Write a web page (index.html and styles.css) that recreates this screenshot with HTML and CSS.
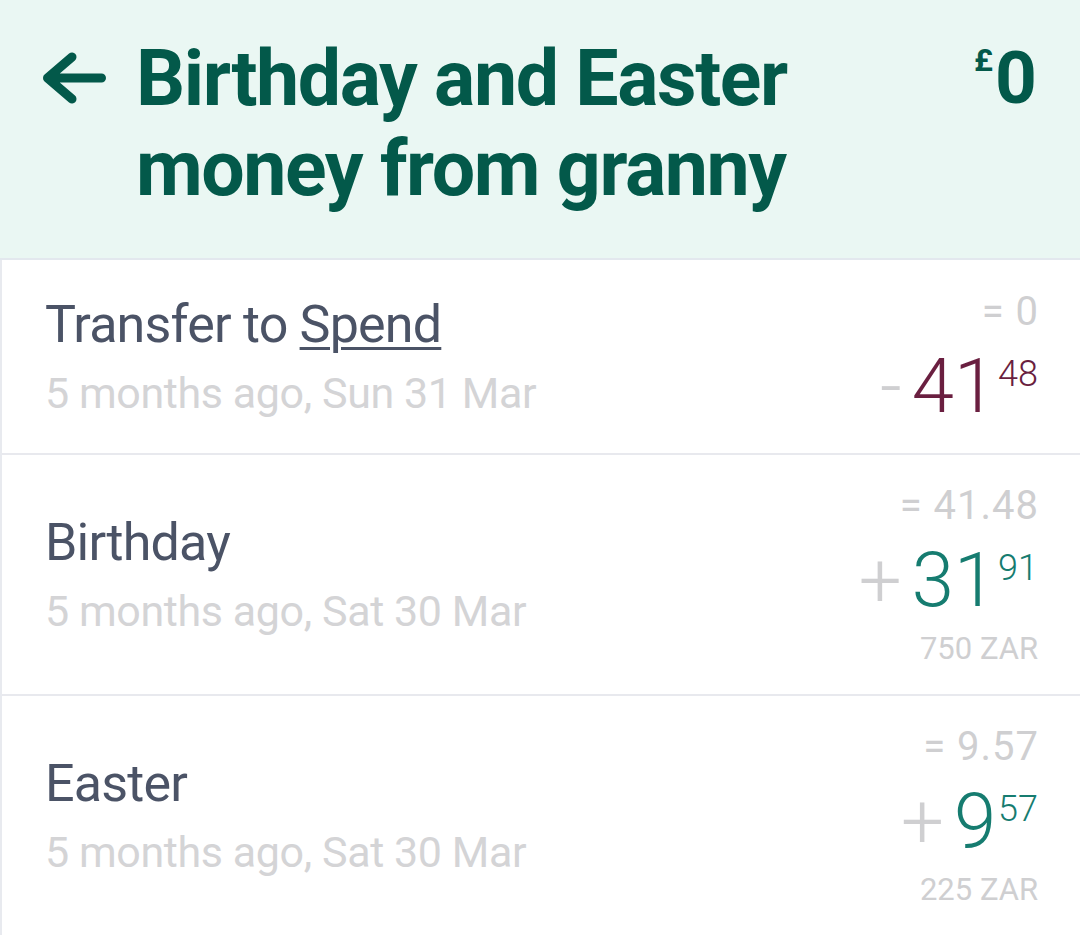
FILE: index.html
```html
<!DOCTYPE html>
<html lang="en">
<head>
<meta charset="utf-8">
<title>Birthday and Easter money from granny</title>
<link rel="stylesheet" href="styles.css">
</head>
<body>
<header class="header">
  <svg class="back" width="72" height="60" viewBox="38 48 72 60" aria-label="Back">
    <path d="M47.5 78 H101.5 M72 57 L47.5 78 L72 99" fill="none" stroke="#03594a" stroke-width="9" stroke-linecap="round" stroke-linejoin="round"/>
  </svg>
  <h1 class="title">Birthday and Easter money from granny</h1>
  <div class="balance"><span class="cur">£</span><span class="bal">0</span></div>
</header>
<main class="list">
  <div class="row row-short">
    <div class="info">
      <div class="name">Transfer to <span class="link">Spend</span></div>
      <div class="date">5 months ago, Sun 31 Mar</div>
    </div>
    <div class="amount">
      <div class="eq">= 0</div>
      <div class="main out"><span class="sign">-</span>41<span class="sup">48</span></div>
    </div>
  </div>
  <div class="row">
    <div class="info">
      <div class="name">Birthday</div>
      <div class="date">5 months ago, Sat 30 Mar</div>
    </div>
    <div class="amount">
      <div class="eq">= 41.48</div>
      <div class="main in"><span class="sign">+</span>31<span class="sup">91</span></div>
      <div class="fx">750 ZAR</div>
    </div>
  </div>
  <div class="row">
    <div class="info">
      <div class="name">Easter</div>
      <div class="date">5 months ago, Sat 30 Mar</div>
    </div>
    <div class="amount">
      <div class="eq">= 9.57</div>
      <div class="main in"><span class="sign">+</span>9<span class="sup">57</span></div>
      <div class="fx">225 ZAR</div>
    </div>
  </div>
</main>
</body>
</html>
```
FILE: styles.css
```css
html, body {
  margin: 0;
  padding: 0;
  background: #ffffff;
  font-family: Roboto, "Liberation Sans", sans-serif;
  width: 1080px;
  overflow: hidden;
}

.header {
  display: flex;
  align-items: flex-start;
  background: #eaf7f3;
  padding: 34px 43px 44px 38px;
  border-bottom: 2px solid #e3e8ee;
  box-sizing: border-box;
  height: 260px;
}

.back {
  flex: none;
  margin-top: 14px;
  margin-right: 26px;
}

.title {
  flex: 1;
  margin: 0;
  font-size: 77px;
  line-height: 90px;
  font-weight: 700;
  color: #03594a;
  letter-spacing: -1.4px;
}

.balance {
  flex: none;
  display: flex;
  align-items: flex-start;
  color: #03594a;
  font-weight: 700;
  margin-top: 4px;
}

.cur {
  font-size: 32px;
  line-height: 32px;
  margin-top: 6px;
  margin-right: 2px;
}

.bal {
  font-size: 73px;
  line-height: 80px;
}

.list {
  border-left: 2px solid #e8eaef;
}

.row {
  display: flex;
  align-items: center;
  justify-content: space-between;
  padding: 22px 42px 22px 43px;
  border-bottom: 2px solid #e8e9ee;
  height: 241px;
  box-sizing: border-box;
}

.row-short {
  height: 195px;
}

.info {
  display: flex;
  flex-direction: column;
}

.name {
  font-size: 52px;
  line-height: 72px;
  color: #4b5366;
  letter-spacing: -0.8px;
}

.link {
  text-decoration: underline;
  text-decoration-thickness: 3px;
  text-underline-offset: 5px;
}

.date {
  font-size: 43px;
  line-height: 64px;
  color: #d4d4d6;
  letter-spacing: -0.4px;
}

.amount {
  display: flex;
  flex-direction: column;
  align-items: flex-end;
  text-align: right;
}

.eq {
  font-size: 40px;
  line-height: 59px;
  color: #cfcfd1;
  letter-spacing: 1px;
  margin-right: -1px;
}

.main {
  font-size: 76px;
  line-height: 90px;
  font-weight: 300;
  white-space: nowrap;
}

.main.out { color: #6a1f40; }
.main.in { color: #167c70; }

.sign {
  color: #cfcfd1;
  margin-right: 10px;
}

.sup {
  font-size: 36px;
  line-height: 1;
  font-weight: 300;
  vertical-align: 26px;
  margin-left: 2px;
}

.fx {
  font-size: 31px;
  line-height: 48px;
  color: #cfcfd1;
}
```
